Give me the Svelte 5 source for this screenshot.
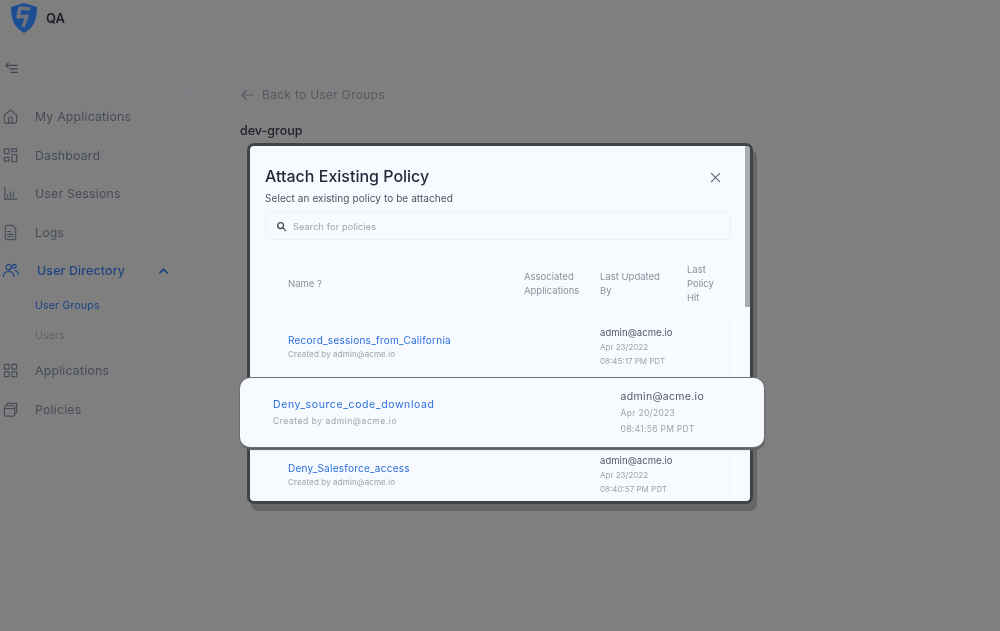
<script>
	const nav = [
		{ label: 'My Applications', icon: 'home' },
		{ label: 'Dashboard', icon: 'dash' },
		{ label: 'User Sessions', icon: 'chart' },
		{ label: 'Logs', icon: 'doc' }
	];
	const nav2 = [
		{ label: 'Applications', icon: 'grid' },
		{ label: 'Policies', icon: 'box' }
	];
	const rows = [
		{ name: 'Record_sessions_from_California', date: 'Apr 23/2022', time: '08:45:17 PM PDT' },
		{ spacer: true },
		{ name: 'Deny_Salesforce_access', date: 'Apr 23/2022', time: '08:40:57 PM PDT' }
	];
	const lifted = { name: 'Deny_source_code_download', date: 'Apr 20/2023', time: '08:41:56 PM PDT' };
</script>

{#snippet icon(name)}
	<svg class="ico" viewBox="0 0 18 18" fill="none" stroke="currentColor" stroke-width="1.2" stroke-linecap="round" stroke-linejoin="round">
		{#if name === 'home'}
			<path d="M2.500 7.500 9 2l6.500 5.500V14a2 2 0 0 1-2 2h-9a2 2 0 0 1-2-2z" />
			<path d="M7 16v-4.500a2 2 0 0 1 4 0V16" />
		{:else if name === 'dash'}
			<rect x="2.500" y="2" width="5" height="5" /><rect x="10.500" y="2" width="5" height="3" />
			<rect x="2.500" y="11" width="5" height="4" /><rect x="10.500" y="8" width="5" height="7.500" />
		{:else if name === 'chart'}
			<path d="M3 2.500V15h12.500" /><path d="M6 13v-3M9 13V7M12 13v-4.500" />
		{:else if name === 'doc'}
			<path d="M3.500 3.500a2 2 0 0 1 2-2H11l3.500 3.500v9.500a2 2 0 0 1-2 2h-7a2 2 0 0 1-2-2z" />
			<path d="M6 8h3M6 11h6M6 13.500h6" />
		{:else if name === 'users'}
			<circle cx="7" cy="5.500" r="2.800" /><circle cx="13" cy="4.500" r="2" />
			<path d="M1.500 15.500c0-3.500 2.500-5.500 5.500-5.500s5.500 2 5.500 5.500M13.500 9c2 .3 3.500 2 3.500 4.500" />
		{:else if name === 'grid'}
			<rect x="2.500" y="2.500" width="5" height="5" /><rect x="10.500" y="2.500" width="5" height="5" />
			<rect x="2.500" y="10.500" width="5" height="5" /><rect x="10.500" y="10.500" width="5" height="5" />
		{:else if name === 'box'}
			<rect x="2.500" y="5" width="11" height="11" rx="1.500" />
			<path d="M5 5V2.500h10.500V12l-2 1.500M2.500 8h11" />
		{/if}
	</svg>
{/snippet}

<div class="page">
	<header class="top">
		<svg class="logo" viewBox="0 0 28 32">
			<path d="M14 1 L27 5 C27 16 25 25 14 31 C3 25 1 16 1 5 Z" fill="#1d4e94" />
			<path d="M20 7 L10 6 L8 15 L17 14 L13 25" fill="none" stroke="#6f747c" stroke-width="3.500" stroke-linejoin="round" />
		</svg>
		<span class="brand">QA</span>
	</header>

	<div class="body">
		<aside class="side">
			<div class="collapse">
				<svg viewBox="0 0 16 14" fill="none" stroke="currentColor" stroke-width="1.200" stroke-linecap="round" stroke-linejoin="round">
					<path d="M1 4h13M4 1 1 4l3 3M6 8h8M7 12h7" />
				</svg>
			</div>
			<nav class="nav">
				{#each nav as item}
					<div class="item">{@render icon(item.icon)}<span>{item.label}</span></div>
				{/each}
				<div class="item open">
					{@render icon('users')}<span>User Directory</span>
					<svg class="chev" viewBox="0 0 12 8" fill="none" stroke="currentColor" stroke-width="1.800" stroke-linecap="round" stroke-linejoin="round"><path d="M2 6l4-4 4 4" /></svg>
				</div>
				<div class="sub active">User Groups</div>
				<div class="sub">Users</div>
				{#each nav2 as item}
					<div class="item">{@render icon(item.icon)}<span>{item.label}</span></div>
				{/each}
			</nav>
		</aside>
		<main class="main">
			<div class="back">
				<svg viewBox="0 0 14 12" fill="none" stroke="currentColor" stroke-width="1.300" stroke-linecap="round" stroke-linejoin="round"><path d="M13 6H1M6 1 1 6l5 5" /></svg>
				<span>Back to User Groups</span>
			</div>
			<div class="group">dev-group</div>
		</main>
	</div>

	<section class="modal">
		<div class="thumb"></div>
		<div class="head">
			<h2>Attach Existing Policy</h2>
			<svg class="close" viewBox="0 0 12 12" fill="none" stroke="currentColor" stroke-width="1.200" stroke-linecap="round"><path d="M1.500 1.500l9 9M10.500 1.500l-9 9" /></svg>
		</div>
		<p class="hint">Select an existing policy to be attached</p>
		<div class="search">
			<svg viewBox="0 0 12 12" fill="none" stroke="#4a4f5a" stroke-width="1.500" stroke-linecap="round"><circle cx="5" cy="5" r="3.200" /><path d="M7.500 7.500 10.500 10.500" /></svg>
			<span>Search for policies</span>
		</div>
		<div class="table">
			<div class="thead">
				<div>Name ?</div>
				<div>Associated Applications</div>
				<div class="narrow">Last Updated By</div>
				<div class="narrow">Last Policy Hit</div>
			</div>
			{#each rows as r}
				<div class="row">
					{#if !r.spacer}
						<div class="cell">
							<div class="name">{r.name}</div>
							<div class="by">Created by admin@acme.io</div>
						</div>
						<div></div>
						<div class="cell upd">
							<div class="who">admin@acme.io</div>
							<div class="when">{r.date}</div>
							<div class="when">{r.time}</div>
						</div>
						<div></div>
					{/if}
				</div>
			{/each}
		</div>
	</section>

	<div class="lifted">
		<div class="cell">
			<div class="name">{lifted.name}</div>
			<div class="by">Created by admin@acme.io</div>
		</div>
		<div class="cell upd">
			<div class="who">admin@acme.io</div>
			<div class="when">{lifted.date}</div>
			<div class="when">{lifted.time}</div>
		</div>
	</div>
</div>

<style>
	:global(body) {
		margin: 0;
		background: #7f7f7f;
	}
	.page {
		position: relative;
		width: 1000px;
		height: 631px;
		overflow: hidden;
		background: #7f7f7f;
		font-family: Inter, 'Liberation Sans', sans-serif;
		color: #3f4550;
		filter: blur(0.7px);
	}
	.top {
		height: 47px;
		box-sizing: border-box;
		padding: 2px 0 0 10px;
		display: flex;
		align-items: flex-start;
		gap: 8px;
	}
	.logo {
		width: 28px;
		height: 32px;
	}
	.brand {
		font-size: 13px;
		font-weight: 600;
		color: #1b1f27;
		margin-top: 8px;
	}
	.body {
		display: flex;
		height: 584px;
	}
	.side {
		width: 191px;
		box-sizing: border-box;
		border-right: 1px solid #78808a;
	}
	.collapse {
		height: 43px;
		box-sizing: border-box;
		border-bottom: 1px solid #78808a;
		padding: 14px 0 0 5px;
	}
	.collapse svg {
		display: block;
		width: 14px;
		height: 14px;
	}
	.nav {
		padding-top: 7.500px;
	}
	.item {
		height: 38.500px;
		display: flex;
		align-items: center;
		gap: 16px;
		padding-left: 2px;
		font-size: 12.300px;
		letter-spacing: 0.2px;
		color: #464c58;
	}
	.ico {
		width: 17px;
		height: 17px;
		flex: none;
	}
	.open {
		color: #1d4384;
		font-weight: 500;
		height: 38px;
	}
	.open span {
		margin-left: 2px;
	}
	.chev {
		width: 11px;
		height: 8px;
		margin-left: 17px;
	}
	.sub {
		height: 31.500px;
		padding-left: 35px;
		font-size: 10.500px;
		line-height: 31px;
		color: #5e636d;
		letter-spacing: 0.2px;
	}
	.sub.active {
		color: #1d4384;
		height: 30.500px;
	}
	.main {
		padding: 40px 0 0 49px;
	}
	.back {
		display: flex;
		align-items: center;
		gap: 8px;
		font-size: 12px;
		letter-spacing: 0.3px;
		color: #555a64;
		margin-left: 1px;
	}
	.back svg {
		width: 13px;
		height: 12px;
	}
	.group {
		margin-top: 21px;
		font-size: 12.500px;
		font-weight: 500;
		color: #1b1f27;
	}
	.modal {
		position: absolute;
		left: 247px;
		top: 143px;
		width: 506px;
		height: 361px;
		box-sizing: border-box;
		border: 3px solid #3f4247;
		border-radius: 7px;
		background: #f7faff;
		padding: 0 20px 0 15px;
		overflow: clip;
		box-shadow: 4px 7px 0 #666;
	}
	.thumb {
		position: absolute;
		right: 0;
		top: 0;
		width: 5px;
		height: 161px;
		background: #a9abaf;
	}
	.head {
		display: flex;
		justify-content: space-between;
		align-items: center;
		padding-top: 20px;
	}
	h2 {
		margin: 0;
		font-size: 16px;
		line-height: 20px;
		font-weight: 500;
		color: #1f2937;
	}
	.close {
		width: 11px;
		height: 11px;
		margin-right: 9px;
		margin-top: 2px;
		color: #5d6675;
	}
	.hint {
		margin: 6px 0 0;
		font-size: 10px;
		line-height: 12px;
		letter-spacing: 0.08px;
		color: #4b5563;
	}
	.search {
		margin-top: 8px;
		width: 466px;
		height: 28px;
		box-sizing: border-box;
		border: 1px solid #eef1f7;
		border-radius: 3px;
		display: flex;
		align-items: center;
		gap: 6px;
		padding-left: 10px;
		font-size: 9px;
		letter-spacing: 0.2px;
		color: #9ca1aa;
	}
	.search svg {
		width: 11px;
		height: 11px;
	}
	.thead,
	.row {
		display: grid;
		grid-template-columns: 236px 76px 87px 43px;
		padding-left: 23px;
		width: 465px;
		box-sizing: border-box;
	}
	.thead {
		height: 75px;
		padding-top: 13px;
		align-items: center;
		font-size: 9.500px;
		line-height: 14px;
		color: #8d929b;
	}
	.narrow {
		width: 66px;
	}
	.narrow:last-child {
		width: 32px;
	}
	.row {
		height: 64px;
		align-items: center;
		border-right: 1px solid #f1f4fa;
	}
	.name {
		font-size: 10px;
		line-height: 14px;
		color: #2a6fdb;
		white-space: nowrap;
		letter-spacing: 0.25px;
	}
	.by {
		margin-top: 1px;
		font-size: 8px;
		line-height: 13px;
		color: #9ea3ab;
		white-space: nowrap;
		letter-spacing: 0.12px;
	}
	.who {
		font-size: 9.500px;
		line-height: 14px;
		letter-spacing: 0.05px;
		color: #525a69;
	}
	.when {
		font-size: 8px;
		line-height: 14.500px;
		color: #9ea3ab;
		white-space: nowrap;
	}
	.lifted {
		position: absolute;
		left: 240px;
		top: 378px;
		width: 524px;
		height: 69px;
		box-sizing: border-box;
		border-radius: 10px;
		background: #f7faff;
		box-shadow: 0 0 0 1px #6c6f74, 1px 3px 1px #5d6064;
		display: flex;
		justify-content: space-between;
		align-items: center;
		padding: 0 60px 0 33px;
	}
	.lifted .name {
		font-size: 10.500px;
		letter-spacing: 0.6px;
	}
	.lifted .by {
		margin-top: 3px;
		font-size: 8.500px;
		letter-spacing: 0.55px;
	}
	.lifted .who {
		font-size: 10.500px;
		line-height: 16px;
		letter-spacing: 0.3px;
	}
	.lifted .when {
		font-size: 8.500px;
		line-height: 16px;
		letter-spacing: 0.3px;
	}
</style>
